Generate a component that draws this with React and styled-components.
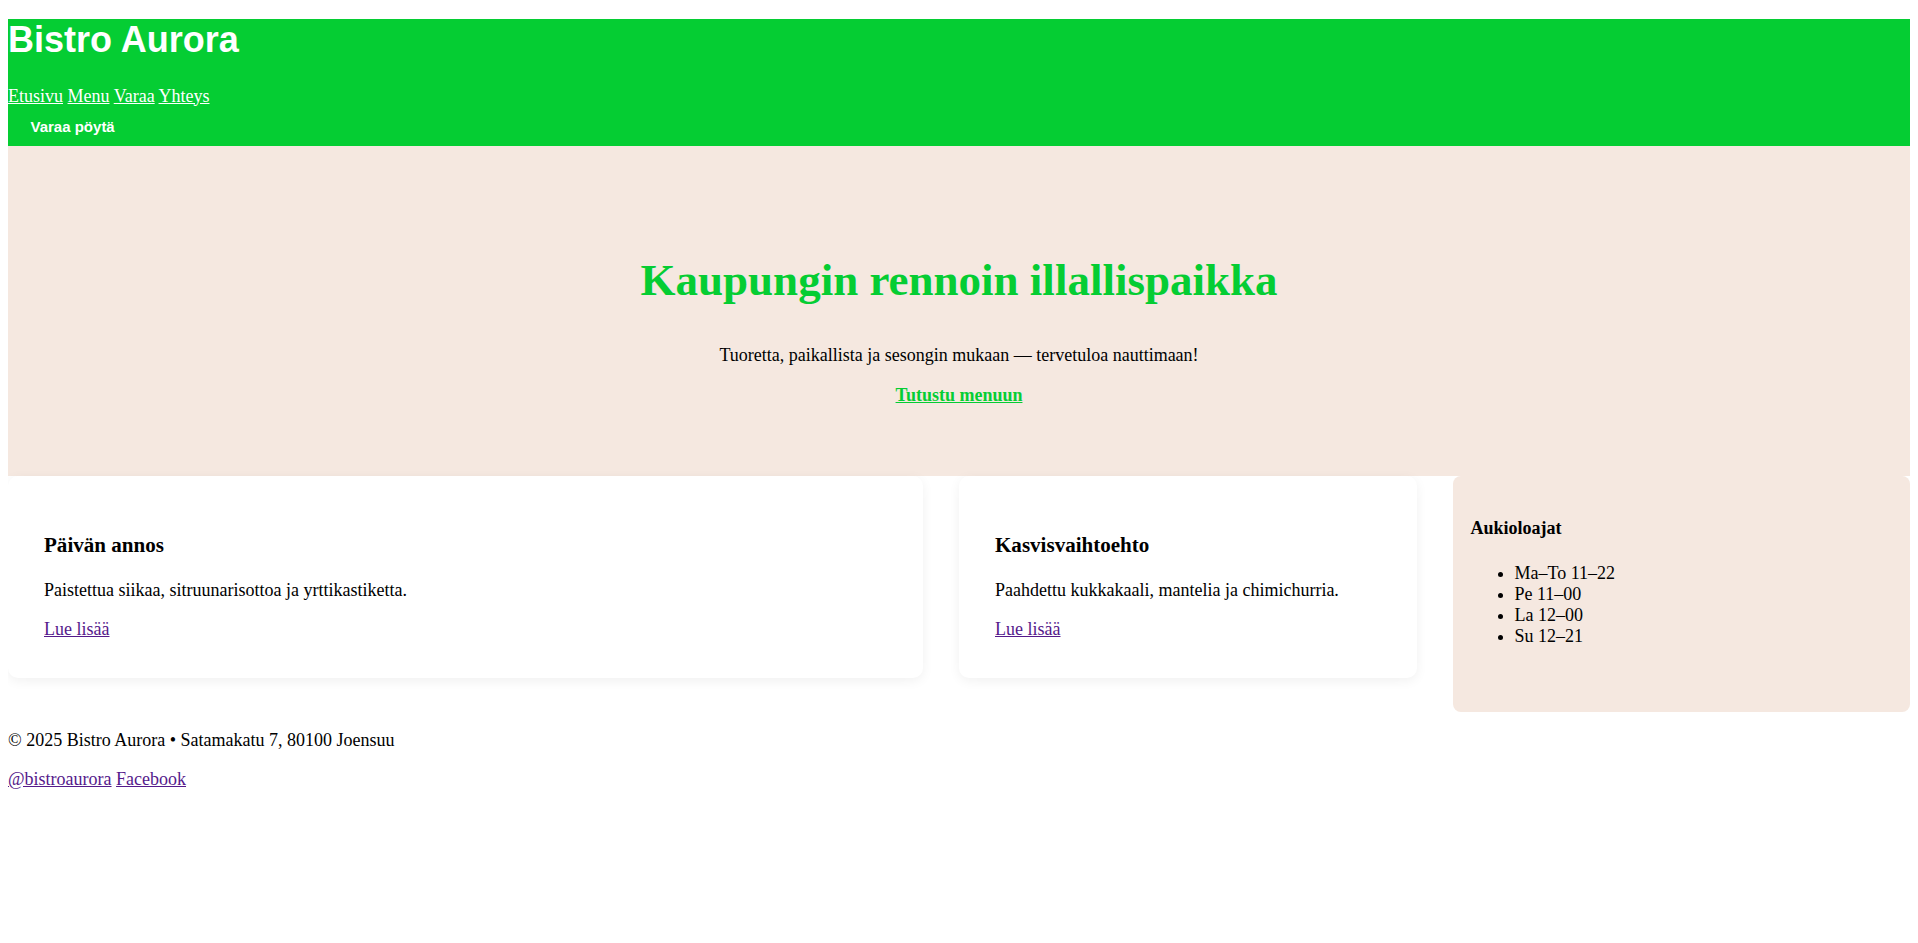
import React from "react";
import styled, { createGlobalStyle } from "styled-components";

const GlobalStyle = createGlobalStyle`
  html {
    font-size: 18px;
  }
  body {
    margin: 8px;
    font-family: "Liberation Serif", "Times New Roman", serif;
    font-size: 18px;
    line-height: normal;
    color: #000;
    background: #fff;
  }
`;

const green = "#05cd33";
const sand = "#f5e8e0";

const Header = styled.header`
  margin-top: 11px;
  background: ${green};
  color: #fff;
`;

const Brand = styled.h1`
  margin: 0 0 24.5px;
  font-family: "Liberation Sans", Arial, sans-serif;
  font-size: 36px;
  color: #fff;
`;

const Nav = styled.nav`
  line-height: normal;
`;

const NavLink = styled.a`
  color: #fff;
  text-decoration: underline;
`;

const BookButton = styled.a`
  display: inline-block;
  padding: 11.3px 22.5px;
  font-family: "Liberation Sans", Arial, sans-serif;
  font-size: 15px;
  font-weight: 700;
  color: #fff;
  text-decoration: none;
  background: ${green};
`;

const Hero = styled.section`
  background: ${sand};
  padding: 78px 1rem 52px;
  text-align: center;
`;

const HeroTitle = styled.h1`
  margin: 30px 0 39px;
  font-size: 2.5rem;
  font-weight: 700;
  color: ${green};
`;

const HeroText = styled.p`
  margin: ${(p) => (p.$gap ? "19px" : "18px")} 0 18px;
`;

const HeroLink = styled.a`
  font-weight: 700;
  color: ${green};
  text-decoration: underline;
`;

const Main = styled.main`
  display: grid;
  grid-template-columns: 2fr 1fr 1fr;
  gap: 2rem;
  align-items: start;
`;

const Card = styled.article`
  background: #fff;
  border-radius: 10px;
  padding: 2rem 2rem 38px;
  box-shadow: 0 3px 12px rgba(0, 0, 0, 0.06);
`;

const CardTitle = styled.h3`
  margin: 1em 0 1.06em;
  font-size: 1.17em;
`;

const CardText = styled.p`
  margin: 1rem 0;
`;

const MoreLink = styled.a`
  color: #551a8b;
`;

const Aside = styled.aside`
  background: ${sand};
  border-radius: 8px;
  padding: 1rem 1rem 47px;
`;

const AsideTitle = styled.h4`
  margin: 1.33em 0;
  font-size: 1em;
`;

const Hours = styled.ul`
  margin: 1rem 0;
  padding-left: 44px;
`;

const Footer = styled.footer``;

const FooterText = styled.p`
  margin: 1rem 0;
`;

const cards = [
  {
    title: "Päivän annos",
    text: "Paistettua siikaa, sitruunarisottoa ja yrttikastiketta.",
  },
  {
    title: "Kasvisvaihtoehto",
    text: "Paahdettu kukkakaali, mantelia ja chimichurria.",
  },
];

const hours = ["Ma–To 11–22", "Pe 11–00", "La 12–00", "Su 12–21"];

export default function App() {
  return (
    <>
      <GlobalStyle />
      <Header>
        <Brand>Bistro Aurora</Brand>
        <Nav>
          <NavLink href="#">Etusivu</NavLink> <NavLink href="#">Menu</NavLink>{" "}
          <NavLink href="#">Varaa</NavLink> <NavLink href="#">Yhteys</NavLink>
        </Nav>
        <BookButton href="#">Varaa pöytä</BookButton>
      </Header>
      <Hero>
        <HeroTitle>Kaupungin rennoin illallispaikka</HeroTitle>
        <HeroText>
          Tuoretta, paikallista ja sesongin mukaan — tervetuloa nauttimaan!
        </HeroText>
        <HeroText $gap>
          <HeroLink href="#">Tutustu menuun</HeroLink>
        </HeroText>
      </Hero>
      <Main>
        {cards.map((c) => (
          <Card key={c.title}>
            <CardTitle>{c.title}</CardTitle>
            <CardText>{c.text}</CardText>
            <MoreLink href="#">Lue lisää</MoreLink>
          </Card>
        ))}
        <Aside>
          <AsideTitle>Aukioloajat</AsideTitle>
          <Hours>
            {hours.map((h) => (
              <li key={h}>{h}</li>
            ))}
          </Hours>
        </Aside>
      </Main>
      <Footer>
        <FooterText>© 2025 Bistro Aurora • Satamakatu 7, 80100 Joensuu</FooterText>
        <FooterText>
          <MoreLink href="#">@bistroaurora</MoreLink> <MoreLink href="#">Facebook</MoreLink>
        </FooterText>
      </Footer>
    </>
  );
}
